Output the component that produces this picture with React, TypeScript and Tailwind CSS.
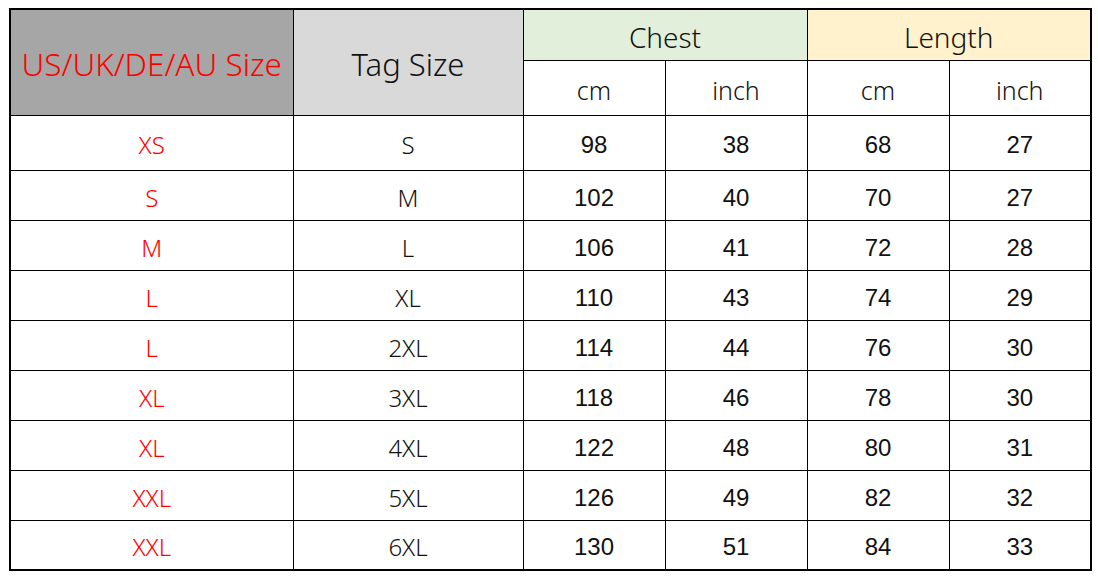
const rows = [
  ["XS", "S", "98", "38", "68", "27"],
  ["S", "M", "102", "40", "70", "27"],
  ["M", "L", "106", "41", "72", "28"],
  ["L", "XL", "110", "43", "74", "29"],
  ["L", "2XL", "114", "44", "76", "30"],
  ["XL", "3XL", "118", "46", "78", "30"],
  ["XL", "4XL", "122", "48", "80", "31"],
  ["XXL", "5XL", "126", "49", "82", "32"],
  ["XXL", "6XL", "130", "51", "84", "33"],
];

const sans = "font-['Noto_Sans',sans-serif]";
const arial = "font-['Liberation_Sans',Arial,sans-serif]";

export default function App() {
  return (
    <div className="w-[1098px] h-[576px] bg-white pl-[9px] pt-[8px]">
      <table className="border-collapse border-2 border-black table-fixed w-[1083px] text-[#111]">
        <colgroup>
          <col className="w-[283px]" />
          <col className="w-[230px]" />
          <col className="w-[142px]" />
          <col className="w-[142px]" />
          <col className="w-[142px]" />
          <col className="w-[142px]" />
        </colgroup>
        <thead>
          <tr className="h-[51px]">
            <th
              rowSpan={2}
              className={`${sans} border border-black bg-[#a6a6a6] text-[#ff0000] text-[31.5px] font-light p-0 pt-[3px] leading-none`}
            >
              US/UK/DE/AU Size
            </th>
            <th
              rowSpan={2}
              className={`${sans} border border-black bg-[#d9d9d9] text-[31px] font-light p-0 pt-[4px] leading-none`}
            >
              Tag Size
            </th>
            <th colSpan={2} className={`${sans} border border-black bg-[#e2efda] text-[28px] font-light p-0 pt-[4px] leading-none`}>
              Chest
            </th>
            <th colSpan={2} className={`${sans} border border-black bg-[#fff2cc] text-[28px] font-light p-0 pt-[4px] leading-none`}>
              Length
            </th>
          </tr>
          <tr className="h-[55px]">
            {["cm", "inch", "cm", "inch"].map((u, i) => (
              <th key={i} className={`${sans} border border-black text-[25px] font-light p-0 pt-[5px] leading-none`}>
                {u}
              </th>
            ))}
          </tr>
        </thead>
        <tbody>
          {rows.map((r, i) => (
            <tr key={i} className={i === 0 ? "h-[55px]" : "h-[50px]"}>
              {r.map((c, j) => (
                <td
                  key={j}
                  className={`border border-black text-center text-[24px] p-0 pt-[5px] leading-none ${
                    j === 0 ? `${sans} font-light text-[#ff0000] text-[24px]` : j === 1 ? `${sans} font-light text-[24px]` : arial
                  }`}
                >
                  {c}
                </td>
              ))}
            </tr>
          ))}
        </tbody>
      </table>
    </div>
  );
}
